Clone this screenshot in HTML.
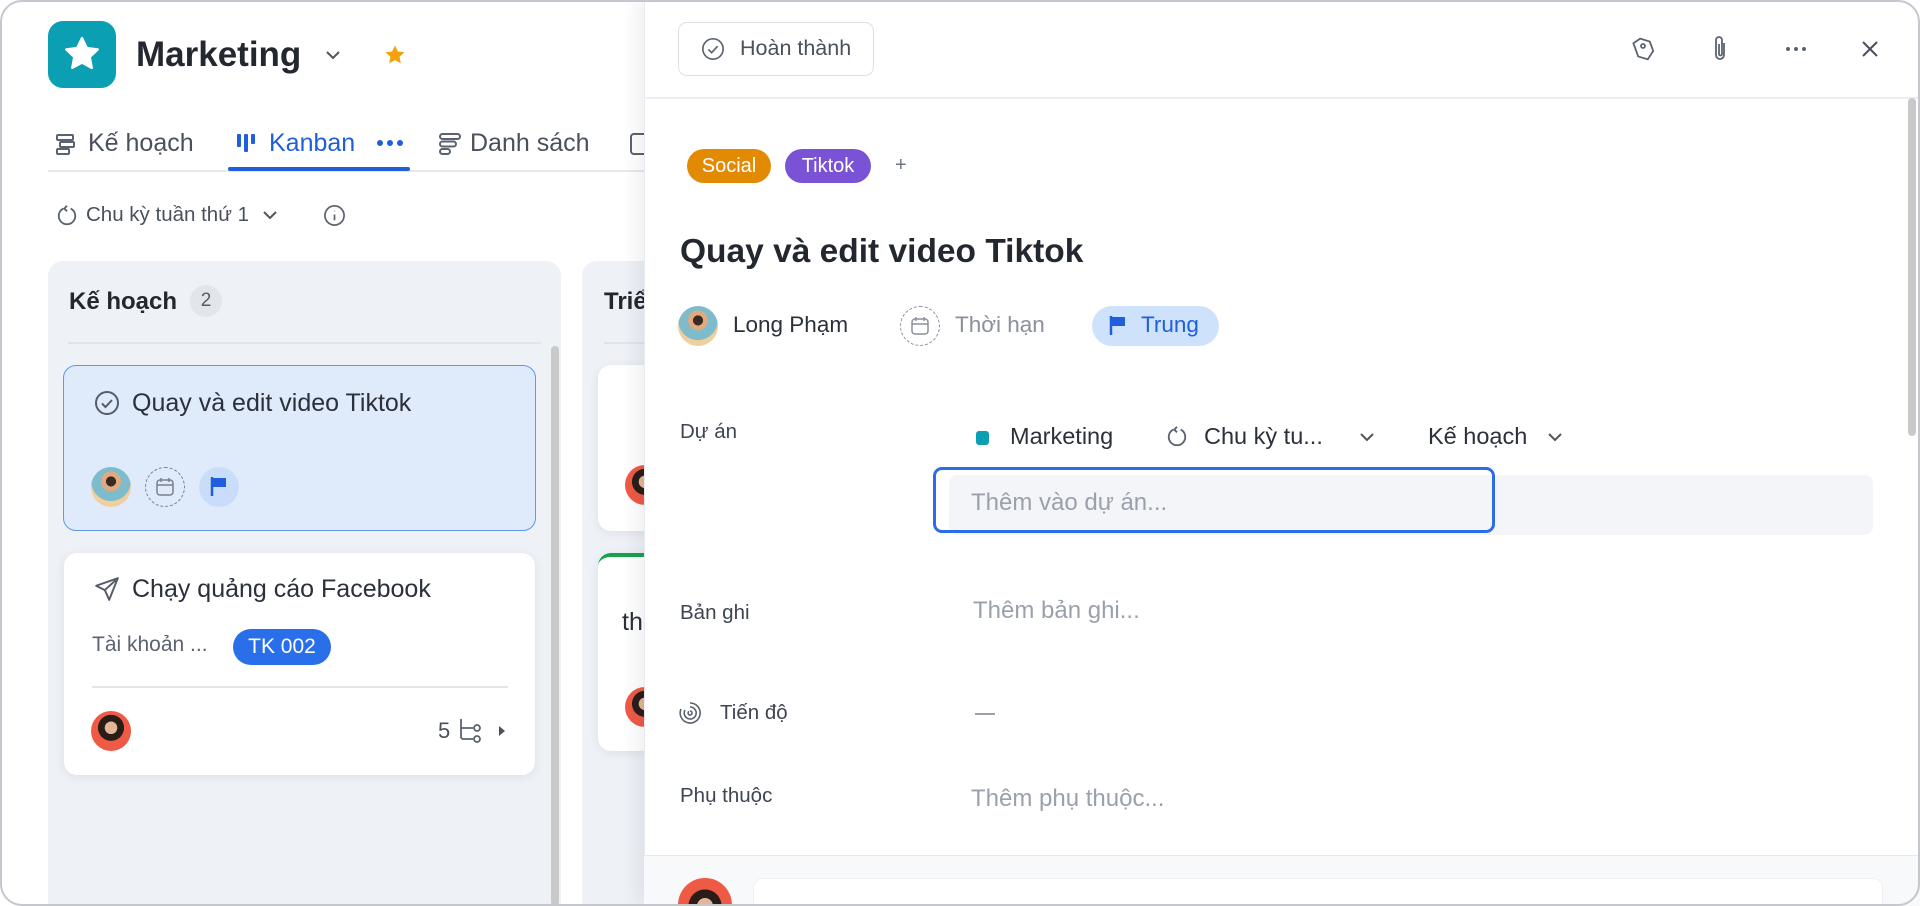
<!DOCTYPE html>
<html><head><meta charset="utf-8">
<style>
*{box-sizing:border-box;margin:0;padding:0}
html,body{width:1920px;height:906px;overflow:hidden}
body{background:#fff;font-family:"Liberation Sans","Noto Sans CJK SC",sans-serif;color:#2b303b;position:relative}
.a{position:absolute}
.frame{position:absolute;left:0;top:0;width:1920px;height:906px;border:2px solid #c4c7ce;border-radius:22px;z-index:50;pointer-events:none}
.t{white-space:nowrap;line-height:1}
.card{position:absolute;border-radius:13px;background:#fff;box-shadow:0 2px 10px rgba(30,40,60,.08)}
.lbl{position:absolute;left:680px;font-size:20.5px;color:#3e4451;white-space:nowrap;transform:translateY(-50%);line-height:1}
.ph{position:absolute;font-size:24px;color:#9aa1ad;white-space:nowrap;transform:translateY(-50%);line-height:1}
svg{position:absolute;overflow:visible}
.man{border-radius:50%;background:radial-gradient(circle at 50% 36%,#3a2a22 0 15%,#e0aa80 16% 30%,#7ebccc 31% 60%,#f0cf9e 61%)}
.wom{border-radius:50%;background:radial-gradient(circle at 50% 42%,#e5b598 0 20%,#2a1d18 21% 42%,#ef5a45 43%)}
</style></head><body>

<!-- left side -->
<div class="a" style="left:48px;top:21px;width:68px;height:67px;border-radius:15px;background:#0b9fb3"></div>
<svg style="left:62px;top:34px" width="40" height="40" viewBox="0 0 24 24"><path d="M12 2.5l2.9 6 6.5.8-4.8 4.5 1.2 6.5L12 17.1l-5.8 3.2 1.2-6.5L2.6 9.3l6.5-.8z" fill="#fff" stroke="#fff" stroke-linejoin="round" stroke-width="1.5"/></svg>
<div class="a t" style="left:136px;top:37px;font-size:35px;font-weight:700;color:#23272f">Marketing</div>
<svg style="left:325px;top:50px" width="16" height="10" viewBox="0 0 16 10"><path d="M2 2l6 6 6-6" fill="none" stroke="#555" stroke-width="2"/></svg>
<svg style="left:383px;top:43px" width="24" height="24" viewBox="0 0 24 24"><path d="M12 2.5l2.9 6 6.5.8-4.8 4.5 1.2 6.5L12 17.1l-5.8 3.2 1.2-6.5L2.6 9.3l6.5-.8z" fill="#f4a10f"/></svg>

<!-- tabs -->
<svg style="left:54px;top:132px" width="24" height="24" viewBox="0 0 24 24" fill="none" stroke="#5b6270" stroke-width="2"><rect x="3" y="3" width="16" height="5" rx="1"/><rect x="6" y="10" width="14" height="5" rx="1"/><rect x="3" y="17" width="12" height="5" rx="1"/></svg>
<div class="a t" style="left:88px;top:131px;font-size:25px;color:#4a505c">Kế hoạch</div>
<svg style="left:236px;top:132px" width="22" height="22" viewBox="0 0 22 22" fill="#1f5fdc"><rect x="1" y="2" width="4" height="13" rx="1"/><rect x="8" y="2" width="4" height="18" rx="1"/><rect x="15" y="2" width="4" height="10" rx="1"/></svg>
<div class="a t" style="left:269px;top:131px;font-size:25px;color:#1f5fdc">Kanban</div>
<svg style="left:377px;top:140px" width="26" height="6" viewBox="0 0 26 6" fill="#1f5fdc"><circle cx="3" cy="3" r="3"/><circle cx="13" cy="3" r="3"/><circle cx="23" cy="3" r="3"/></svg>
<div class="a" style="left:48px;top:170px;width:600px;height:2px;background:#e6e8ec"></div>
<div class="a" style="left:228px;top:167px;width:182px;height:4px;background:#1f5fdc;border-radius:2px"></div>
<svg style="left:438px;top:132px" width="24" height="24" viewBox="0 0 24 24" fill="none" stroke="#5b6270" stroke-width="2"><rect x="2" y="2" width="20" height="5" rx="2.5"/><rect x="2" y="9.5" width="16" height="5" rx="2.5"/><rect x="2" y="17" width="10" height="5" rx="2.5"/></svg>
<div class="a t" style="left:470px;top:131px;font-size:25px;color:#4a505c">Danh sách</div>
<svg style="left:630px;top:132px" width="14" height="24" viewBox="0 0 14 24" fill="none" stroke="#5b6270" stroke-width="2"><rect x="1" y="2" width="18" height="20" rx="3"/></svg>

<svg style="left:56px;top:204px" width="22" height="22" viewBox="0 0 24 24" fill="none" stroke="#5b6270" stroke-width="2"><path d="M8 5a9 9 0 1 0 8 0"/><path d="M12 2l-3 3 3 3"/></svg>
<div class="a t" style="left:86px;top:205px;font-size:20.5px;color:#4a505c">Chu kỳ tuần thứ 1</div>
<svg style="left:262px;top:210px" width="16" height="10" viewBox="0 0 16 10"><path d="M2 2l6 6 6-6" fill="none" stroke="#555" stroke-width="2"/></svg>
<svg style="left:323px;top:204px" width="23" height="23" viewBox="0 0 24 24" fill="none" stroke="#5b6270" stroke-width="1.8"><circle cx="12" cy="12" r="10"/><path d="M12 11v6M12 7v.5"/></svg>

<!-- column 1 -->
<div class="a" style="left:48px;top:261px;width:513px;height:660px;background:#eef1f6;border-radius:15px"></div>
<div class="a t" style="left:69px;top:290px;font-size:24px;font-weight:700;color:#23272f">Kế hoạch</div>
<div class="a t" style="left:190px;top:285px;width:32px;height:32px;border-radius:16px;background:#e2e5ea;font-size:19px;color:#555c68;text-align:center;line-height:32px">2</div>
<div class="a" style="left:68px;top:342px;width:473px;height:2px;background:#e1e4e9"></div>
<div class="a" style="left:551px;top:346px;width:8px;height:560px;background:#c9c9c9;border-radius:4px"></div>

<div class="card" style="left:63px;top:365px;width:473px;height:166px;background:#dfeafb;border:1.5px solid #5f98ee;box-shadow:none"></div>
<svg style="left:94px;top:390px" width="26" height="26" viewBox="0 0 26 26" fill="none" stroke="#555c68" stroke-width="2"><circle cx="13" cy="13" r="11"/><path d="M8 13.5l3.5 3.5 6.5-7"/></svg>
<div class="a t" style="left:132px;top:391px;font-size:25px;color:#2b303b">Quay và edit video Tiktok</div>
<div class="a man" style="left:91px;top:467px;width:40px;height:40px"></div>
<div class="a" style="left:145px;top:467px;width:40px;height:40px;border-radius:50%;border:1.5px dashed #7a808b"></div>
<svg style="left:155px;top:477px" width="20" height="20" viewBox="0 0 20 20" fill="none" stroke="#7a808b" stroke-width="1.5"><rect x="2" y="3" width="16" height="15" rx="3"/><path d="M2 8h16M6 1v4M14 1v4"/></svg>
<div class="a" style="left:199px;top:467px;width:40px;height:40px;border-radius:50%;background:#c9ddfa"></div>
<svg style="left:210px;top:476px" width="20" height="22" viewBox="0 0 20 22"><path d="M2 1v19" stroke="#1f5fdc" stroke-width="2.5"/><rect x="3" y="2" width="13" height="9" fill="#1f5fdc"/></svg>

<div class="card" style="left:64px;top:553px;width:471px;height:222px"></div>
<svg style="left:94px;top:576px" width="26" height="26" viewBox="0 0 24 24" fill="none" stroke="#555c68" stroke-width="1.8" stroke-linejoin="round"><path d="M22 2L2 9l8 4 4 9z"/><path d="M10 13l12-11"/></svg>
<div class="a t" style="left:132px;top:577px;font-size:25px;color:#2b303b">Chạy quảng cáo Facebook</div>
<div class="a t" style="left:92px;top:634px;font-size:21px;color:#5b6270">Tài khoản ...</div>
<div class="a t" style="left:233px;top:629px;width:98px;height:36px;border-radius:18px;background:#2a6fea;color:#fff;font-size:21px;text-align:center;line-height:36px">TK 002</div>
<div class="a" style="left:92px;top:686px;width:416px;height:1.5px;background:#e3e5ea"></div>
<div class="a wom" style="left:91px;top:711px;width:40px;height:40px"></div>
<div class="a t" style="left:438px;top:720px;font-size:22px;color:#4a505c">5</div>
<svg style="left:457px;top:717px" width="26" height="26" viewBox="0 0 26 26" fill="none" stroke="#5b6270" stroke-width="1.8"><path d="M4 2v18a2 2 0 0 0 2 2h10M4 11h12"/><circle cx="20" cy="11" r="3"/><circle cx="20" cy="22" r="3"/></svg>
<svg style="left:498px;top:725px" width="8" height="12" viewBox="0 0 8 12"><path d="M1 1l6 5-6 5z" fill="#4a505c"/></svg>

<!-- column 2 -->
<div class="a" style="left:582px;top:261px;width:100px;height:660px;background:#eef1f6;border-radius:15px"></div>
<div class="a t" style="left:604px;top:290px;font-size:24px;font-weight:700;color:#23272f">Triển</div>
<div class="a" style="left:604px;top:342px;width:60px;height:2px;background:#e1e4e9"></div>
<div class="card" style="left:598px;top:365px;width:80px;height:166px"></div>
<div class="a wom" style="left:625px;top:465px;width:40px;height:40px"></div>
<div class="card" style="left:598px;top:553px;width:80px;height:198px;border-top:4px solid #16a34a"></div>
<div class="a t" style="left:622px;top:610px;font-size:25px;color:#2b303b">th</div>
<div class="a wom" style="left:625px;top:687px;width:40px;height:40px"></div>

<!-- detail panel -->
<div class="a" style="left:644px;top:0;width:1276px;height:906px;background:#fff;box-shadow:-6px 0 18px rgba(30,40,60,.08);border-left:1px solid #e8eaee"></div>
<div class="a" style="left:644px;top:97px;width:1276px;height:2px;background:#eceef1"></div>
<div class="a" style="left:678px;top:22px;width:196px;height:54px;border:1.5px solid #dde0e5;border-radius:9px"></div>
<svg style="left:701px;top:37px" width="24" height="24" viewBox="0 0 26 26" fill="none" stroke="#5b6270" stroke-width="1.8"><circle cx="13" cy="13" r="11"/><path d="M8 13.5l3.5 3.5 6.5-7"/></svg>
<div class="a t" style="left:740px;top:38px;font-size:21.5px;color:#4a505c">Hoàn thành</div>
<svg style="left:1632px;top:36px" width="24" height="26" viewBox="0 0 24 26" fill="none" stroke="#5b6270" stroke-width="1.8"><path d="M4 4l8-2 8 6v10l-8 6-8-6z" transform="rotate(-20 12 13)"/><circle cx="11" cy="10" r="2"/></svg>
<svg style="left:1710px;top:35px" width="20" height="28" viewBox="0 0 20 28" fill="none" stroke="#5b6270" stroke-width="1.8"><path d="M14 8v12a4 4 0 0 1-8 0V5a3 3 0 0 1 6 0v14a1.5 1.5 0 0 1-3 0V9"/></svg>
<svg style="left:1786px;top:47px" width="20" height="4" viewBox="0 0 20 4" fill="#5b6270"><circle cx="2" cy="2" r="2"/><circle cx="10" cy="2" r="2"/><circle cx="18" cy="2" r="2"/></svg>
<svg style="left:1861px;top:40px" width="18" height="18" viewBox="0 0 18 18"><path d="M2 2l14 14M16 2L2 16" stroke="#4a505c" stroke-width="2"/></svg>
<div class="a" style="left:1908px;top:98px;width:8px;height:338px;background:#c9c9c9;border-radius:4px"></div>

<div class="a t" style="left:687px;top:149px;width:84px;height:34px;border-radius:17px;background:#e38a03;color:#fff;font-size:20px;text-align:center;line-height:34px">Social</div>
<div class="a t" style="left:785px;top:149px;width:86px;height:34px;border-radius:17px;background:#7a52d6;color:#fff;font-size:20px;text-align:center;line-height:34px">Tiktok</div>
<div class="a t" style="left:895px;top:155px;font-size:20px;color:#6b7280">+</div>

<div class="a t" style="left:680px;top:235px;font-size:33.5px;font-weight:700;color:#23272f">Quay và edit video Tiktok</div>

<div class="a man" style="left:678px;top:306px;width:40px;height:40px"></div>
<div class="a t" style="left:733px;top:314px;font-size:22.5px;color:#2b303b">Long Phạm</div>
<div class="a" style="left:900px;top:306px;width:40px;height:40px;border-radius:50%;border:1.5px dashed #8a909b"></div>
<svg style="left:910px;top:316px" width="20" height="20" viewBox="0 0 20 20" fill="none" stroke="#8a909b" stroke-width="1.5"><rect x="2" y="3" width="16" height="15" rx="3"/><path d="M2 8h16M6 1v4M14 1v4"/></svg>
<div class="a t" style="left:955px;top:314px;font-size:22.5px;color:#8a909b">Thời hạn</div>
<div class="a" style="left:1092px;top:306px;width:127px;height:40px;border-radius:20px;background:#cfe2fb"></div>
<svg style="left:1109px;top:315px" width="20" height="22" viewBox="0 0 20 22"><path d="M2 1v19" stroke="#1f5fdc" stroke-width="2.5"/><rect x="3" y="2" width="13" height="9" fill="#1f5fdc"/></svg>
<div class="a t" style="left:1141px;top:314px;font-size:22.5px;color:#1f5fdc">Trung</div>

<div class="lbl" style="top:432px">Dự án</div>
<div class="a" style="left:976px;top:431px;width:13px;height:14px;border-radius:3px;background:#0b9fb3"></div>
<div class="a t" style="left:1010px;top:425px;font-size:23.5px;color:#2b303b">Marketing</div>
<svg style="left:1166px;top:425px" width="22" height="22" viewBox="0 0 24 24" fill="none" stroke="#5b6270" stroke-width="2"><path d="M8 5a9 9 0 1 0 8 0"/><path d="M12 2l-3 3 3 3"/></svg>
<div class="a t" style="left:1204px;top:425px;font-size:23.5px;color:#2b303b">Chu kỳ tu...</div>
<svg style="left:1359px;top:432px" width="16" height="10" viewBox="0 0 16 10"><path d="M2 2l6 6 6-6" fill="none" stroke="#555" stroke-width="2"/></svg>
<div class="a t" style="left:1428px;top:425px;font-size:23.5px;color:#2b303b">Kế hoạch</div>
<svg style="left:1547px;top:432px" width="16" height="10" viewBox="0 0 16 10"><path d="M2 2l6 6 6-6" fill="none" stroke="#555" stroke-width="2"/></svg>

<div class="a" style="left:949px;top:475px;width:924px;height:60px;background:#f4f5f8;border-radius:8px"></div>
<div class="a" style="left:933px;top:467px;width:562px;height:66px;border:3.5px solid #2b6de8;border-radius:9px"></div>
<div class="ph" style="left:971px;top:503px">Thêm vào dự án...</div>

<div class="lbl" style="top:613px">Bản ghi</div>
<div class="ph" style="left:973px;top:611px">Thêm bản ghi...</div>

<svg style="left:679px;top:701px" width="22" height="24" viewBox="0 0 22 24" fill="none" stroke="#5b6270" stroke-width="1.6"><path d="M11 2a10 10 0 1 1-9 6"/><path d="M11 6a6 6 0 1 1-5 3"/><path d="M11 10a2 2 0 1 1-1 .3"/></svg>
<div class="lbl" style="left:720px;top:713px">Tiến độ</div>
<div class="a" style="left:975px;top:713px;width:20px;height:2px;background:#9aa1ad"></div>

<div class="lbl" style="top:796px">Phụ thuộc</div>
<div class="ph" style="left:971px;top:799px">Thêm phụ thuộc...</div>

<div class="a" style="left:644px;top:855px;width:1276px;height:51px;background:#f8f9fb;border-top:1.5px solid #e6e8ec"></div>
<div class="a wom" style="left:678px;top:878px;width:54px;height:28px;border-radius:27px 27px 0 0;background:radial-gradient(circle at 50% 100%,#e5b598 0 20%,#2a1d18 21% 42%,#ef5a45 43%)"></div>
<div class="a" style="left:753px;top:878px;width:1130px;height:28px;border-radius:10px 10px 0 0;background:#fff;border:1px solid #eef0f3;border-bottom:none"></div>

<div class="frame"></div>
</body></html>
